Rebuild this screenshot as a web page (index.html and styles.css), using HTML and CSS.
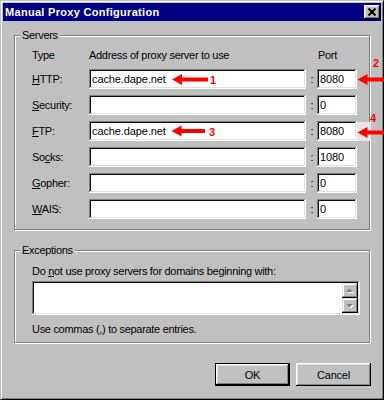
FILE: index.html
```html
<!DOCTYPE html>
<html>
<head>
<meta charset="utf-8">
<title>Manual Proxy Configuration</title>
<link rel="stylesheet" href="styles.css">
</head>
<body>
<div class="window">
  <div class="titlebar">
    <span class="title">Manual Proxy Configuration</span>
    <span class="close">
      <svg width="16" height="14" viewBox="0 0 16 14"><path d="M4.5 3.5 L11.5 10.5 M11.5 3.5 L4.5 10.5" stroke="#000" stroke-width="2" fill="none"/></svg>
    </span>
  </div>
  <div class="content">
    <div class="group servers">
      <span class="legend">Servers</span>
      <div class="grid">
        <span class="head">Type</span>
        <span class="head">Address of proxy server to use</span>
        <span></span>
        <span class="head port-head">Port</span>

        <span class="lbl"><u>H</u>TTP:</span>
        <div class="field">cache.dape.net</div>
        <span class="colon">:</span>
        <div class="field port">8080</div>

        <span class="lbl"><u>S</u>ecurity:</span>
        <div class="field"></div>
        <span class="colon">:</span>
        <div class="field port">0</div>

        <span class="lbl"><u>F</u>TP:</span>
        <div class="field">cache.dape.net</div>
        <span class="colon">:</span>
        <div class="field port">8080</div>

        <span class="lbl">So<u>c</u>ks:</span>
        <div class="field"></div>
        <span class="colon">:</span>
        <div class="field port">1080</div>

        <span class="lbl"><u>G</u>opher:</span>
        <div class="field"></div>
        <span class="colon">:</span>
        <div class="field port">0</div>

        <span class="lbl"><u>W</u>AIS:</span>
        <div class="field"></div>
        <span class="colon">:</span>
        <div class="field port">0</div>
      </div>
    </div>

    <div class="group exceptions">
      <span class="legend">Exceptions</span>
      <div class="text">Do <u>n</u>ot use proxy servers for domains beginning with:</div>
      <div class="textarea">
        <div class="spin">
          <span class="spin-btn">
            <svg width="16" height="15" viewBox="0 0 16 15"><polygon points="5,10 12,10 8.5,6.5" fill="#fff"/><polygon points="4,9 11,9 7.5,5.5" fill="#808080"/></svg>
          </span>
          <span class="spin-btn">
            <svg width="16" height="15" viewBox="0 0 16 15"><polygon points="5,7 12,7 8.5,10.5" fill="#fff"/><polygon points="4,6 11,6 7.5,9.5" fill="#808080"/></svg>
          </span>
        </div>
      </div>
      <div class="text note">Use commas (,) to separate entries.</div>
    </div>

    <div class="buttons">
      <span class="btn default">OK</span>
      <span class="btn">Cancel</span>
    </div>
  </div>

  <svg class="annot" width="384" height="400" viewBox="0 0 384 400">
    <rect x="357" y="122" width="14" height="19" fill="#e6e6e6"/>
    <polygon points="172,79.5 182,74 182,85" fill="#ff0000"/>
    <rect x="181" y="77.5" width="27" height="4" fill="#ff0000"/>
    <text x="210" y="83.5" class="num">1</text>

    <polygon points="357.5,79.5 367.5,74 367.5,85" fill="#ff0000"/>
    <rect x="367" y="77.5" width="17" height="4" fill="#ff0000"/>
    <text x="373" y="66.5" class="num">2</text>

    <polygon points="171.5,131 181.5,125.5 181.5,136.5" fill="#ff0000"/>
    <rect x="181" y="129" width="24" height="4" fill="#ff0000"/>
    <text x="209" y="135.5" class="num">3</text>

    <polygon points="357.5,132.5 367.5,127 367.5,138" fill="#ff0000"/>
    <rect x="367" y="130.5" width="17" height="4" fill="#ff0000"/>
    <text x="370" y="121.5" class="num">4</text>
  </svg>
</div>
</body>
</html>
```

FILE: styles.css
```css
body {
  margin: 0;
  background: #c0c0c0;
}

.window {
  position: relative;
  width: 384px;
  height: 400px;
  box-sizing: border-box;
  background: #c0c0c0;
  border: 1px solid;
  border-color: #c0c0c0 #000 #000 #c0c0c0;
  box-shadow: inset 1px 1px #fff, inset -1px -1px #808080;
  padding: 2px;
  font-family: "Liberation Sans", Arial, sans-serif;
  font-size: 11px;
  color: #000;
}

.titlebar {
  height: 18px;
  background: #000080;
  display: flex;
  align-items: center;
  justify-content: space-between;
  padding: 0 1px 0 2px;
}

.title {
  color: #fff;
  font-weight: bold;
  font-size: 11px;
  line-height: 18px;
  letter-spacing: 0.3px;
}

.close {
  display: block;
  width: 16px;
  height: 14px;
  box-sizing: border-box;
  background: #c0c0c0;
  box-shadow: inset -1px -1px #000, inset 1px 1px #fff, inset -2px -2px #808080, inset 2px 2px #dfdfdf;
}

.close svg {
  display: block;
}

.content {
  padding: 14px 10px 0 11px;
}

.group {
  position: relative;
  width: 356px;
  box-sizing: border-box;
  border: 1px solid #808080;
  box-shadow: inset 1px 1px #fff, 1px 1px #fff;
  padding-left: 17px;
}

.legend {
  position: absolute;
  top: -7px;
  left: 5px;
  padding: 0 2px;
  background: #c0c0c0;
  line-height: 13px;
  letter-spacing: -0.3px;
}

.servers {
  height: 195px;
  padding-top: 13px;
}

.grid {
  display: grid;
  grid-template-columns: 57px 217px 11px 40px;
  grid-template-rows: 14px repeat(6, 20px);
  row-gap: 6px;
}

.head {
  line-height: 13px;
  align-self: start;
  letter-spacing: -0.3px;
}

.port-head {
  padding-left: 1px;
}

.lbl {
  line-height: 20px;
  letter-spacing: -0.3px;
}

u {
  text-decoration: underline;
  text-underline-offset: 1px;
}

.field {
  height: 20px;
  box-sizing: border-box;
  background: #fff;
  box-shadow: inset -1px -1px #fff, inset 1px 1px #808080, inset -2px -2px #dfdfdf, inset 2px 2px #0a0a0a;
  padding: 0 3px;
  line-height: 20px;
  letter-spacing: -0.1px;
  white-space: nowrap;
}

.field.port {
  padding-left: 3px;
}

.colon {
  text-align: center;
  line-height: 20px;
  padding-left: 1px;
}

.exceptions {
  margin-top: 20px;
  height: 93px;
  padding-top: 14px;
}

.text {
  line-height: 13px;
  letter-spacing: -0.3px;
}

.textarea {
  width: 328px;
  height: 34px;
  margin-top: 3px;
  box-sizing: border-box;
  background: #fff;
  box-shadow: inset -1px -1px #fff, inset 1px 1px #808080, inset -2px -2px #dfdfdf, inset 2px 2px #0a0a0a;
  padding: 2px;
  display: flex;
  justify-content: flex-end;
}

.spin {
  display: flex;
  flex-direction: column;
}

.spin-btn {
  display: block;
  width: 16px;
  height: 15px;
  box-sizing: border-box;
  background: #c0c0c0;
  box-shadow: inset -1px -1px #000, inset 1px 1px #dfdfdf, inset -2px -2px #808080, inset 2px 2px #fff;
}

.spin-btn svg {
  display: block;
}

.note {
  margin-top: 8px;
}

.buttons {
  display: flex;
  justify-content: flex-end;
  gap: 6px;
  margin-top: 20px;
}

.btn {
  width: 75px;
  height: 23px;
  box-sizing: border-box;
  background: #c0c0c0;
  box-shadow: inset -1px -1px #000, inset 1px 1px #fff, inset -2px -2px #808080, inset 2px 2px #dfdfdf;
  display: flex;
  align-items: center;
  justify-content: center;
  letter-spacing: -0.2px;
}

.btn.default {
  border: 1px solid #000;
}

.annot {
  position: absolute;
  left: -1px;
  top: -1px;
  pointer-events: none;
}

.num {
  fill: #ff0000;
  font-family: "Liberation Sans", Arial, sans-serif;
  font-weight: bold;
  font-size: 11px;
}
```
